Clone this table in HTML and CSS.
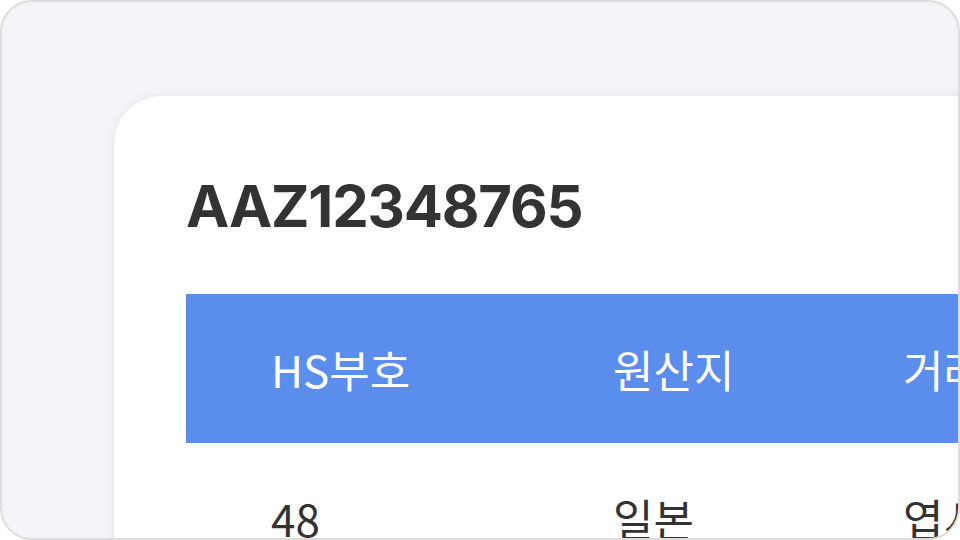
FILE: index.html
```html
<!DOCTYPE html>
<html lang="ko">
  <head>
    <meta charset="UTF-8" />
    <meta name="viewport" content="width=device-width, initial-scale=1.0" />
    <title>수입 신고 상세</title>
    <link rel="stylesheet" href="styles.css">
  </head>
  <body>
    <div class="frame">
      <div class="card">
        <h1 class="doc-number">AAZ12348765</h1>

        <div class="item-table">
          <div class="row row-head">
            <div class="cell">HS부호</div>
            <div class="cell">원산지</div>
            <div class="cell">거래처</div>
          </div>
          <div class="row">
            <div class="cell">48</div>
            <div class="cell">일본</div>
            <div class="cell">엽서</div>
          </div>
        </div>
      </div>
    </div>
  </body>
</html>
```

FILE: styles.css
```css
body {
  margin: 0;
  padding: 0;
  background-color: #ffffff;
  font-family: Inter, "Noto Sans CJK KR", sans-serif;
}

/* Outer window */
.frame {
  width: 960px;
  height: 540px;
  box-sizing: border-box;
  border: 2px solid #dddddd;
  border-radius: 32px;
  background-color: #f3f4f8;
  overflow: hidden;
  padding: 94px 0 0 112px;
}

/* White sheet */
.card {
  width: 1000px;
  height: 600px;
  box-sizing: border-box;
  padding: 81px 0 0 72px;
  background-color: #ffffff;
  border-top-left-radius: 48px;
  box-shadow: 0 0 10px rgba(0, 0, 0, 0.07);
}

.doc-number {
  margin: 0 0 59px;
  font-family: Inter, "Liberation Sans", sans-serif;
  font-size: 58px;
  font-weight: 700;
  line-height: 1;
  letter-spacing: -1.2px;
  color: #333333;
}

/* Item table */
.item-table {
  font-family: "Noto Sans CJK KR", "Noto Sans", sans-serif;
  font-size: 44px;
  color: #333333;
}

.row {
  display: grid;
  grid-template-columns: 342px 290px 342px;
  height: 149px;
  align-items: center;
}

.row-head {
  background-color: #5b8eec;
  color: #ffffff;
}

.cell {
  padding-left: 85px;
  line-height: 1;
  white-space: nowrap;
}
```
